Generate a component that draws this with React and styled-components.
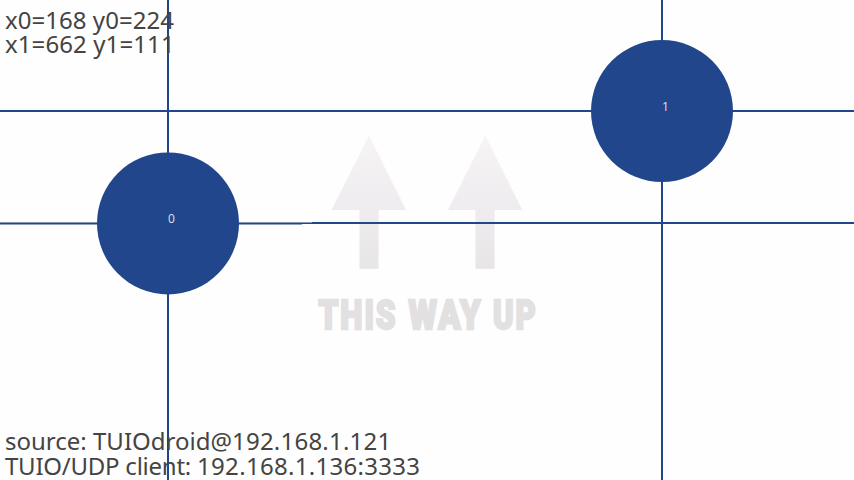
import React from "react";
import styled, { createGlobalStyle } from "styled-components";

const GlobalStyle = createGlobalStyle`
  body { margin: 0; background: #fefefe; overflow: hidden; }
`;

const Surface = styled.main`
  position: relative;
  display: flex;
  flex-direction: column;
  justify-content: space-between;
  box-sizing: border-box;
  width: 854px;
  height: 480px;
  padding: 8px 5px 2px;
  overflow: hidden;
  background: #fefefe;
`;

const Readout = styled.section`
  z-index: 2;
  display: flex;
  flex-direction: column;
  color: #444;
  font-family: "Noto Sans", "Open Sans", sans-serif;
  font-size: 24px;
  line-height: ${(p) => p.$leading}px;
  white-space: pre;
`;

const Line = styled.div`
  letter-spacing: ${(p) => p.$track || 0}px;
`;

const Value = styled.span`
  letter-spacing: ${(p) => p.$track}px;
`;

const Watermark = styled.svg`
  position: absolute;
  left: 310px;
  top: 125px;
`;

const VerticalGuide = styled.i`
  position: absolute;
  top: 0;
  bottom: 0;
  left: ${(p) => p.$x - 1}px;
  width: 2px;
  background: #21468b;
`;

const HorizontalGuide = styled.i`
  position: absolute;
  left: ${(p) => p.$from || 0}px;
  width: ${(p) => p.$length || 854}px;
  top: ${(p) => p.$y}px;
  height: ${(p) => p.$thickness || 2}px;
  background: ${(p) => p.$color || "#21468b"};
`;

const Touch = styled.div`
  position: absolute;
  z-index: 1;
  left: 0;
  top: 0;
  transform: translate(${(p) => p.$x - 71}px, ${(p) => p.$y - 71}px);
  display: flex;
  align-items: flex-start;
  box-sizing: border-box;
  width: 142px;
  height: 142px;
  padding: 61px 0 0 71px;
  border-radius: 50%;
  background: #21468b;
  color: #dfe3eb;
  font: 12px/12px "Open Sans", "Noto Sans", sans-serif;
`;

function ThisWayUp() {
  return (
    <Watermark width="240" height="215" viewBox="0 0 240 215">
      <defs>
        <linearGradient id="arrowFade" gradientUnits="userSpaceOnUse" x1="0" y1="10" x2="0" y2="144">
          <stop offset="0" stopColor="#f6f4f5" />
          <stop offset="0.55" stopColor="#eeecee" />
          <stop offset="1" stopColor="#e7e5e6" />
        </linearGradient>
      </defs>
      <g fill="url(#arrowFade)">
        <path d="M59 10.5 L96 85 H68.5 V143.7 H49.5 V85 H21.5 Z" />
        <path d="M175.3 10.5 L212.3 85 H184.5 V143.7 H165.5 V85 H138 Z" />
      </g>
      <g
        fill="#e2e0e1"
        stroke="#e2e0e1"
        strokeWidth="2.4"
        fontFamily="Roboto, sans-serif"
        fontWeight="900"
        fontSize="41.5"
        letterSpacing="2.5"
      >
        <text x="8.5" y="203.5" textLength="79" lengthAdjust="spacingAndGlyphs">THIS</text>
        <text x="98.5" y="203.5" textLength="74" lengthAdjust="spacingAndGlyphs">WAY</text>
        <text x="183" y="203.5" textLength="44.5" lengthAdjust="spacingAndGlyphs">UP</text>
      </g>
    </Watermark>
  );
}

export default function App() {
  return (
    <>
      <GlobalStyle />
      <Surface>
        <ThisWayUp />
        <VerticalGuide $x={168} />
        <VerticalGuide $x={662} />
        <HorizontalGuide $y={110} />
        <HorizontalGuide $y={222} $length={312} $thickness={1} $color="#8797b8" />
        <HorizontalGuide $y={223} $length={312} $thickness={1} />
        <HorizontalGuide $y={224} $length={302} $thickness={1} $color="#8fa3c7" />
        <HorizontalGuide $y={222} $from={312} $length={542} />
        <Touch $x={168} $y={223.4}>0</Touch>
        <Touch $x={662} $y={111}>1</Touch>
        <Readout $leading={24}>
          <Line $track={0.04}>x0=168 y0=224</Line>
          <Line $track={0.1}>x1=662 y1=111</Line>
        </Readout>
        <Readout $leading={25}>
          <Line>source: TUIOdroid@<Value $track={0.22}>192.168.1.121</Value></Line>
          <Line $track={-0.24}>TUIO/UDP client: <Value $track={0.3}>192.168.1.136:3333</Value></Line>
        </Readout>
      </Surface>
    </>
  );
}
